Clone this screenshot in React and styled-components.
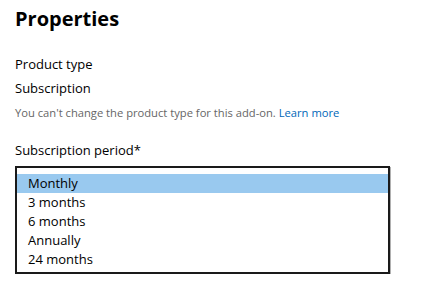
import styled, { createGlobalStyle } from "styled-components";

const GlobalStyle = createGlobalStyle`
  body {
    margin: 0;
    background: #fff;
    font-family: "Segoe UI", "Open Sans", sans-serif;
    color: #000;
  }
`;

const periods = ["Monthly", "3 months", "6 months", "Annually", "24 months"];

export default function App() {
  return (
    <>
      <GlobalStyle />
      <Page>
        <Title>Properties</Title>
        <Label>Product type</Label>
        <Value>Subscription</Value>
        <Hint>
          You can't change the product type for this add-on.{" "}
          <Link href="#">Learn more</Link>
        </Hint>
        <FieldLabel>Subscription period*</FieldLabel>
        <ListBox role="listbox">
          {periods.map((p, i) => (
            <Option key={p} role="option" $selected={i === 0}>
              {p}
            </Option>
          ))}
        </ListBox>
      </Page>
    </>
  );
}

const Page = styled.div`
  padding: 5px 15px 0;
  width: 375px;
`;

const Title = styled.h1`
  margin: 0;
  font-size: 20px;
  font-weight: 700;
  line-height: 28px;
`;

const Label = styled.div`
  margin-top: 21px;
  font-size: 13px;
  line-height: 20px;
`;

const Value = styled.div`
  margin-top: 4px;
  font-size: 13px;
  line-height: 20px;
`;

const Hint = styled.div`
  margin-top: 7px;
  font-size: 11.2px;
  line-height: 16px;
  color: #666;
`;

const Link = styled.a`
  color: #0067b8;
  text-decoration: none;
`;

const FieldLabel = styled.div`
  margin-top: 19px;
  font-size: 13px;
  line-height: 20px;
`;

const ListBox = styled.div`
  margin-top: 6px;
  border: 2px solid #1a1a1a;
  box-shadow: 1px 1px 0 #b0b0b0;
  padding: 6px 0 3px;
  box-sizing: border-box;
  height: 108px;
`;

const Option = styled.div`
  height: 19px;
  line-height: 19px;
  padding-left: 11px;
  font-size: 13px;
  background: ${(p) => (p.$selected ? "#99c9ef" : "transparent")};
`;
